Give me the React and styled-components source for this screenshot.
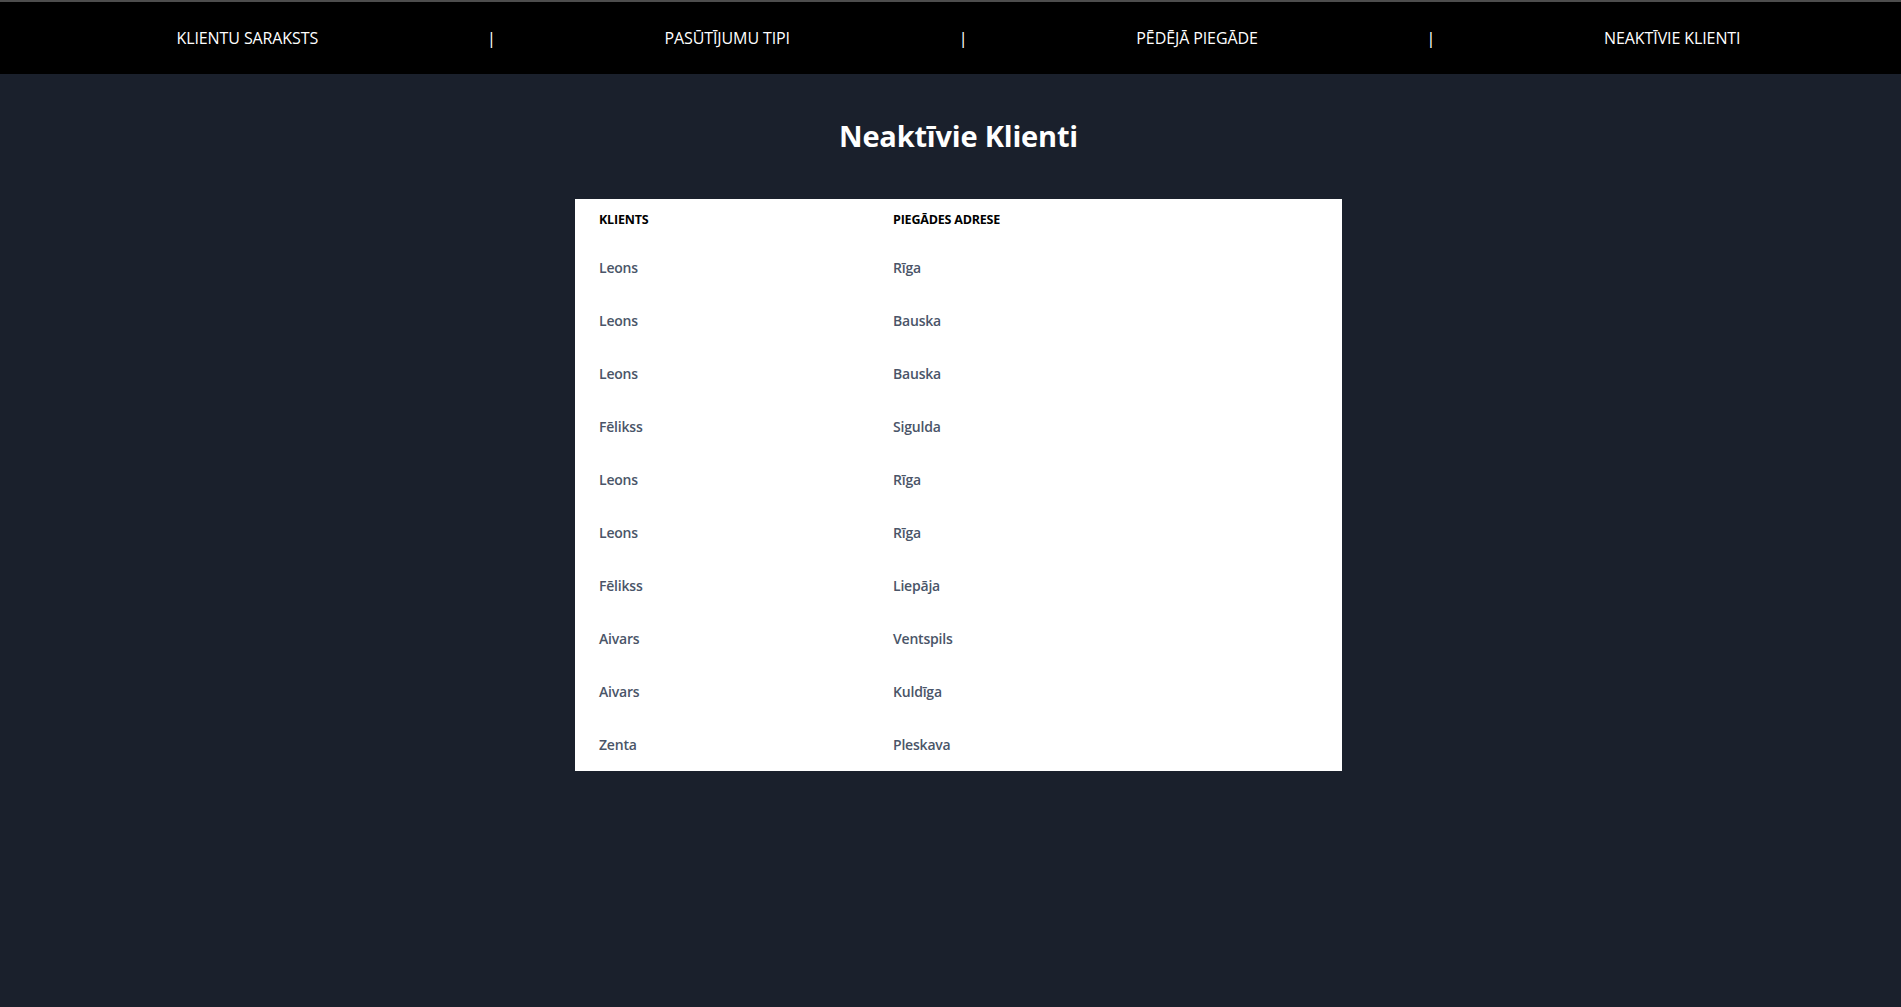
import React from "react";
import styled, { createGlobalStyle } from "styled-components";

const GlobalStyle = createGlobalStyle`
  html, body {
    margin: 0;
    padding: 0;
    background: #1a202c;
    overflow: hidden;
  }
  body {
    font-family: "Open Sans", "Noto Sans", sans-serif;
  }
`;

const Page = styled.div`
  min-height: 1007px;
  background: #1a202c;
`;

const NavBar = styled.nav`
  background: #000;
  border-top: 2px solid #4d4d4d;
  height: 72px;
  padding-left: 8px;
`;

const NavList = styled.ul`
  list-style: none;
  margin: 0 -8px 0 0;
  padding: 0;
  height: 100%;
  display: flex;
  align-items: center;
  justify-content: space-evenly;
`;

const NavLink = styled.li`
  color: #fff;
  font-size: 16px;
  line-height: 20px;
  text-transform: uppercase;
  letter-spacing: -0.1px;
  cursor: pointer;
`;

const Separator = styled.li`
  color: #fff;
  font-size: 17px;
  line-height: 20px;
`;

const Main = styled.main`
  padding-left: 8px;
`;

const Content = styled.div`
  width: 1901px;
  display: flex;
  flex-direction: column;
  align-items: center;
`;

const Title = styled.h1`
  margin: 42px 0 0;
  color: #fff;
  font-size: 29px;
  line-height: 40px;
  font-weight: 700;
  letter-spacing: -0.2px;
`;

const Card = styled.div`
  margin-top: 43px;
  width: 767px;
  background: #fff;
`;

const Table = styled.table`
  width: 100%;
  border-collapse: collapse;
  table-layout: fixed;
`;

const HeadCell = styled.th`
  box-sizing: border-box;
  width: ${(p) => p.$width || "auto"};
  padding: 13px 24px 13px;
  text-align: left;
  font-size: 12.5px;
  line-height: 16px;
  font-weight: 700;
  color: #000;
  text-transform: uppercase;
  letter-spacing: -0.2px;
`;

const Cell = styled.td`
  padding: 16px 24px;
  font-size: 14px;
  line-height: 21px;
  font-weight: 600;
  color: #4a5568;
  white-space: nowrap;
  letter-spacing: -0.2px;
`;

const navItems = [
  "Klientu saraksts",
  "Pasūtījumu tipi",
  "Pēdējā piegāde",
  "Neaktīvie klienti",
];

const rows = [
  ["Leons", "Rīga"],
  ["Leons", "Bauska"],
  ["Leons", "Bauska"],
  ["Fēlikss", "Sigulda"],
  ["Leons", "Rīga"],
  ["Leons", "Rīga"],
  ["Fēlikss", "Liepāja"],
  ["Aivars", "Ventspils"],
  ["Aivars", "Kuldīga"],
  ["Zenta", "Pleskava"],
];

export default function App() {
  return (
    <Page>
      <GlobalStyle />
      <NavBar>
        <NavList>
          {navItems.map((item, i) => (
            <React.Fragment key={item}>
              {i > 0 && <Separator>|</Separator>}
              <NavLink>{item}</NavLink>
            </React.Fragment>
          ))}
        </NavList>
      </NavBar>
      <Main>
        <Content>
          <Title>Neaktīvie Klienti</Title>
          <Card>
            <Table>
              <thead>
                <tr>
                  <HeadCell $width="294px">Klients</HeadCell>
                  <HeadCell>Piegādes adrese</HeadCell>
                </tr>
              </thead>
              <tbody>
                {rows.map(([name, addr], i) => (
                  <tr key={i}>
                    <Cell>{name}</Cell>
                    <Cell>{addr}</Cell>
                  </tr>
                ))}
              </tbody>
            </Table>
          </Card>
        </Content>
      </Main>
    </Page>
  );
}
